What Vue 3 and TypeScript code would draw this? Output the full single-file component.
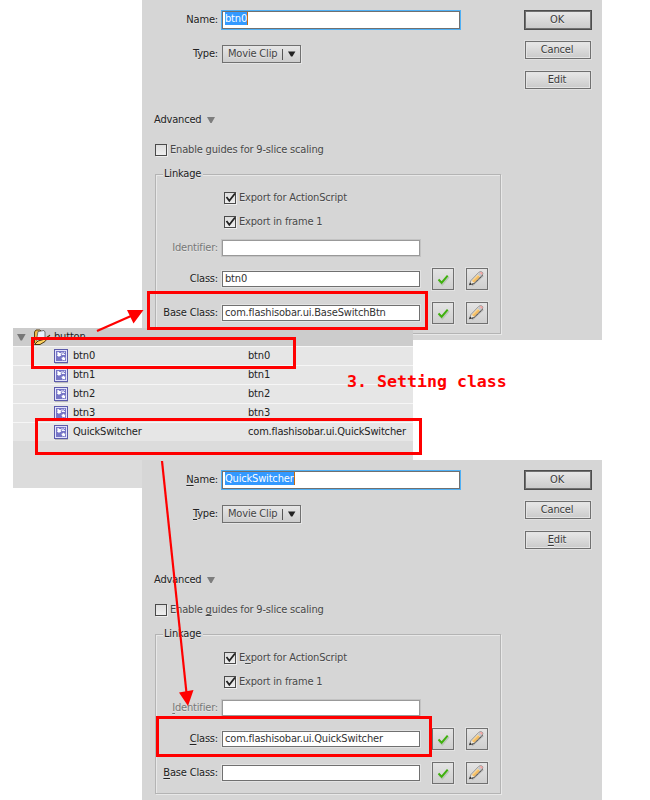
<script setup lang="ts">
interface Dialog {
  id: string
  name: string
  className: string
  baseClass: string
  mnemonics: boolean
}
interface Item {
  name: string
  linkage: string
}

const dialogs: Dialog[] = [
  { id: 'first', name: 'btn0', className: 'btn0', baseClass: 'com.flashisobar.ui.BaseSwitchBtn', mnemonics: false },
  { id: 'second', name: 'QuickSwitcher', className: 'com.flashisobar.ui.QuickSwitcher', baseClass: '', mnemonics: true },
]
const items: Item[] = [
  { name: 'btn0', linkage: 'btn0' },
  { name: 'btn1', linkage: 'btn1' },
  { name: 'btn2', linkage: 'btn2' },
  { name: 'btn3', linkage: 'btn3' },
  { name: 'QuickSwitcher', linkage: 'com.flashisobar.ui.QuickSwitcher' },
]
</script>

<template>
  <main class="canvas">
    <section v-for="d in dialogs" :key="d.id" class="dialog" :class="[d.id, { keys: d.mnemonics }]">
      <div class="top">
        <div class="props">
          <div class="row name-row">
            <label class="lbl"><u>N</u>ame:</label>
            <div class="field focus"><span class="sel">{{ d.name }}</span></div>
          </div>
          <div class="row type-row">
            <label class="lbl"><u>T</u>ype:</label>
            <div class="select">
              <span class="opt">Movie Clip</span>
              <i class="bar"></i>
              <svg width="8" height="6" viewBox="0 0 8 6"><path d="M0 0.5H7.4L4.4 5.5H3z" fill="#222" /></svg>
            </div>
          </div>
        </div>
        <div class="buttons">
          <button class="btn ok">OK</button>
          <button class="btn">Cancel</button>
          <button class="btn"><u>E</u>dit</button>
        </div>
      </div>
      <div class="advanced">
        <span>Advanced</span>
        <svg width="8" height="6" viewBox="0 0 8 6"><path d="M0 0H8L4.6 6H3.4z" fill="#7d7d7d" /></svg>
      </div>
      <div class="guides">
        <i class="box"></i>
        <span class="cap">Enable <u>g</u>uides for 9-slice scaling</span>
      </div>
      <div class="group">
        <div class="legend">Linkage</div>
        <div class="check">
          <i class="box"><svg width="14" height="13" viewBox="0 0 14 13"><path d="M3.500 6L6.300 9.700L12 2.500" /></svg></i>
          <span class="cap">E<u>x</u>port for ActionScript</span>
        </div>
        <div class="check">
          <i class="box"><svg width="14" height="13" viewBox="0 0 14 13"><path d="M3.500 6L6.300 9.700L12 2.500" /></svg></i>
          <span class="cap">Export in frame 1</span>
        </div>
        <div class="grow identifier">
          <label class="lbl dim"><u>I</u>dentifier:</label>
          <div class="field off"></div>
        </div>
        <div v-for="f in ['Class', 'Base Class']" :key="f" class="grow">
          <label class="lbl"><u>{{ f[0] }}</u>{{ f.slice(1) }}:</label>
          <div class="field"><span class="val">{{ f === 'Class' ? d.className : d.baseClass }}</span></div>
          <div class="tool">
            <svg width="20" height="20" viewBox="0 0 20 20">
              <path d="M6 12.5L9.3 16L16 8" fill="none" stroke="#b9c4b6" stroke-width="1.3" />
              <path d="M5.5 10.5L8.7 13.7L14.7 6.7" fill="none" stroke="#3fb00e" stroke-width="2" />
            </svg>
          </div>
          <div class="tool">
            <svg width="20" height="20" viewBox="0 0 20 20">
              <path d="M5 16.500L16 6.500" stroke="#b4b4b4" stroke-width="2" />
              <path d="M2.500 15.800L4 11.500L12 3.200Q14 2 15.600 3.500Q16.300 5 15.200 6.200L7 14.500Z" fill="#efeadf" stroke="#777" stroke-width=".8" />
              <path d="M4.800 11.800L10.800 5.700L13 8L7 13.800Z" fill="#f4bc62" />
              <path d="M5.600 11.800L11.300 6" stroke="#ffe1a0" />
              <path d="M10.800 5.400L12.600 3.400L15 5.800L13.300 7.700Z" fill="#c5c7ca" />
              <path d="M12.500 3.500Q14.300 2.400 15.400 3.600Q16 4.800 15 5.900Z" fill="#f3a2a2" />
              <path d="M2.200 16.200L3 13.600L4.800 15.300Z" fill="#222" />
              <path d="M4.800 15.400L7.300 14.400L15.300 6.400" fill="none" stroke="#333" stroke-dasharray="1.4 .7" />
            </svg>
          </div>
        </div>
      </div>
    </section>

    <section class="library">
      <div class="folder">
        <svg class="tri" width="9" height="7" viewBox="0 0 9 7"><path d="M0 0H8.6L5 6.5H3.6z" fill="#777" /></svg>
        <svg width="18" height="17" viewBox="0 0 18 17">
          <path d="M1.500 14V3L3 1H7L9 3V9L3 15Z" fill="#f0b94a" stroke="#5d4312" />
          <path d="M3.500 11L5 2.500L11 1.500L12 3V10L5 13Z" fill="#e9f2fa" stroke="#555" stroke-width=".8" />
          <path d="M1.500 15.500L5 12L10.500 10.500L17 6L12 12.500L7 15.500Z" fill="#ffd35f" stroke="#4b360c" />
        </svg>
        <span>button</span>
      </div>
      <div v-for="i in items" :key="i.name" class="item">
        <svg width="14" height="15" viewBox="0 0 14 15">
          <path d="M1 14.500H14" stroke="#bbb" />
          <rect x=".5" y=".5" width="13" height="13" fill="#e2e2fa" stroke="#5c5bab" />
          <rect x="2" y="2" width="10" height="10" fill="#7675c6" />
          <path d="M3 3.500L4.500 3L5.500 4L7 4L6.700 5.500L7.300 6.700L5.800 7L5 8L4 7L2.800 6.500L3.700 5.200Z" fill="#fff" />
          <path d="M7.200 9L8.600 8.500L9.200 7.500L10.200 8.600L11.600 8.800L10.900 10L11.200 11.500L9.700 11L8.300 11.500L8.300 10.200Z" fill="#fff" />
          <path d="M8 3V5.500H11M8.500 5.200L11 2.800" fill="none" stroke="#fff" stroke-width=".9" />
        </svg>
        <span class="item-name">{{ i.name }}</span>
        <span class="item-link">{{ i.linkage }}</span>
      </div>
    </section>

    <svg class="marks" width="650" height="800" viewBox="0 0 650 800">
      <g fill="none" stroke="#f00" stroke-width="3">
        <rect x="32.5" y="338.5" width="262" height="29" />
        <rect x="36.5" y="419.5" width="384" height="34" />
        <rect x="148.5" y="292.5" width="278" height="36" />
        <rect x="157.5" y="717.5" width="273" height="38" />
      </g>
      <g stroke="#f00" stroke-width="2.2" fill="#f00">
        <path d="M97 331L131 316" />
        <path d="M162 461L186.5 693" />
        <path stroke="none" d="M143.500 310L127 310L133.500 323.500ZM188 706L179 692.500L193.500 690Z" />
      </g>
    </svg>
    <div class="note">3. Setting class</div>
  </main>
</template>

<style>
body { margin: 0; background: #fff; }
</style>

<style scoped>
* { box-sizing: border-box; }
.canvas {
  position: relative; width: 650px; height: 800px; overflow: hidden; background: #fff;
  font: 11px/14px "DejaVu Sans Condensed", "DejaVu Sans", sans-serif; font-stretch: condensed;
  letter-spacing: -0.18px; color: #222; white-space: nowrap;
}
u { text-decoration: none; }
.keys u { text-decoration: underline; text-underline-offset: 2px; text-decoration-thickness: 1px; }
.dialog { position: absolute; left: 142px; width: 460px; height: 340px; background: #d6d6d6; text-shadow: 0 1px #e4e4e4; }
.first { top: 0; }
.second { top: 460px; z-index: 2; }
.top { display: flex; justify-content: space-between; padding: 10px 10px 0 0; height: 113px; }
.row { display: flex; align-items: center; }
.lbl { width: 76px; text-align: right; margin-right: 3px; flex: none; }
.name-row { height: 20px; }
.type-row { margin-top: 15px; height: 18px; }
.field { background: #fff; border: 1px solid #707070; box-shadow: 0 0 0 1px #e3e3e3; text-shadow: none; }
.focus { width: 240px; height: 20px; border: 1px solid #4fb0f5; box-shadow: inset 0 0 0 1px #707070; padding: 1px 0 0 3px; }
.sel { display: inline-block; height: 13px; line-height: 14px; vertical-align: top; background: #3399ff; color: #fff; border-right: 1px solid #c66a10; }
.select { display: flex; align-items: center; width: 79px; height: 18px; margin-left: 1px; padding-left: 5px; border: 1px solid #707070; background: linear-gradient(#e6e6e6, #cdcdcd); box-shadow: 1px 1px #e6e6e6; color: #444; }
.opt { width: 54px; }
.bar { width: 1px; height: 11px; background: #555; margin-right: 5px; }
.buttons { display: flex; flex-direction: column; align-items: center; width: 68px; }
.btn { width: 66px; height: 18px; margin: 0 0 12px; padding: 0 2px 0 0; border: 1px solid #707070; background: linear-gradient(#e8e8e8, #cacaca); box-shadow: inset 0 0 0 1px #e4e4e4, 0 0 0 1px #e0e0e0; font: inherit; letter-spacing: inherit; color: #3c3c3c; text-shadow: 0 1px #eee; }
.ok { width: 68px; height: 20px; margin-bottom: 11px; border-color: #4d4d4d; box-shadow: inset 0 0 0 1px #707070; }
.advanced { display: flex; align-items: center; gap: 6px; height: 14px; padding-left: 12px; }
.guides { display: flex; align-items: center; height: 14px; margin-top: 16px; padding-left: 13px; }
.box { flex: none; width: 12px; height: 12px; border: 1px solid #4a4a4a; background: linear-gradient(#dedede, #eee); box-shadow: 1px 1px #eee; }
.box svg { display: block; margin: -2px 0 0 -2px; }
.box path { fill: none; stroke: #222; stroke-width: 1.8; }
.cap { margin-left: 3px; color: #484848; }
.group { margin: 17px 0 0 13px; width: 346px; height: 160px; border: 1px solid #b4b4b4; box-shadow: inset 1px 1px #e8e8e8, 1px 1px #e8e8e8; }
.legend { width: 40px; height: 14px; margin: -8px 0 0 7px; padding-left: 1px; background: #d6d6d6; }
.check { display: flex; align-items: center; height: 24px; padding-left: 68px; }
.legend + .check { margin-top: 5px; }
.grow { display: flex; align-items: center; height: 34px; }
.grow .lbl { width: 62px; margin-right: 4px; }
.grow .field { width: 198px; height: 16px; }
.grow .off { border-color: #999; box-shadow: 0 0 0 1px #c3c3c3; }
.identifier { height: 28px; }
.dim { color: #777; }
.val { display: block; line-height: 14px; padding-left: 2px; color: #333; }
.tool { width: 22px; height: 22px; margin-left: 12px; border: 1px solid #707070; background: linear-gradient(#e4e4e4, #cfcfcf); box-shadow: 0 0 0 1px #e2e2e2; }
.tool svg { display: block; }
.library { position: absolute; left: 13px; top: 328px; width: 400px; height: 160px; background: #dcdcdc; z-index: 1; }
.folder { display: flex; align-items: center; height: 18px; background: #ccc; padding-left: 4px; gap: 3px; }
.folder .tri { margin-right: 4px; }
.item { display: flex; align-items: center; height: 19px; padding-left: 41px; background: #e6e6e6; border-top: 1px solid #f6f6f6; }
.item svg { flex: none; }
.item-name { width: 175px; margin-left: 5px; }
.marks { position: absolute; inset: 0; z-index: 3; }
.note { position: absolute; left: 347px; top: 372px; z-index: 4; font: bold 16.6px/20px "DejaVu Sans Mono", monospace; letter-spacing: 0; color: #f00; }
</style>
